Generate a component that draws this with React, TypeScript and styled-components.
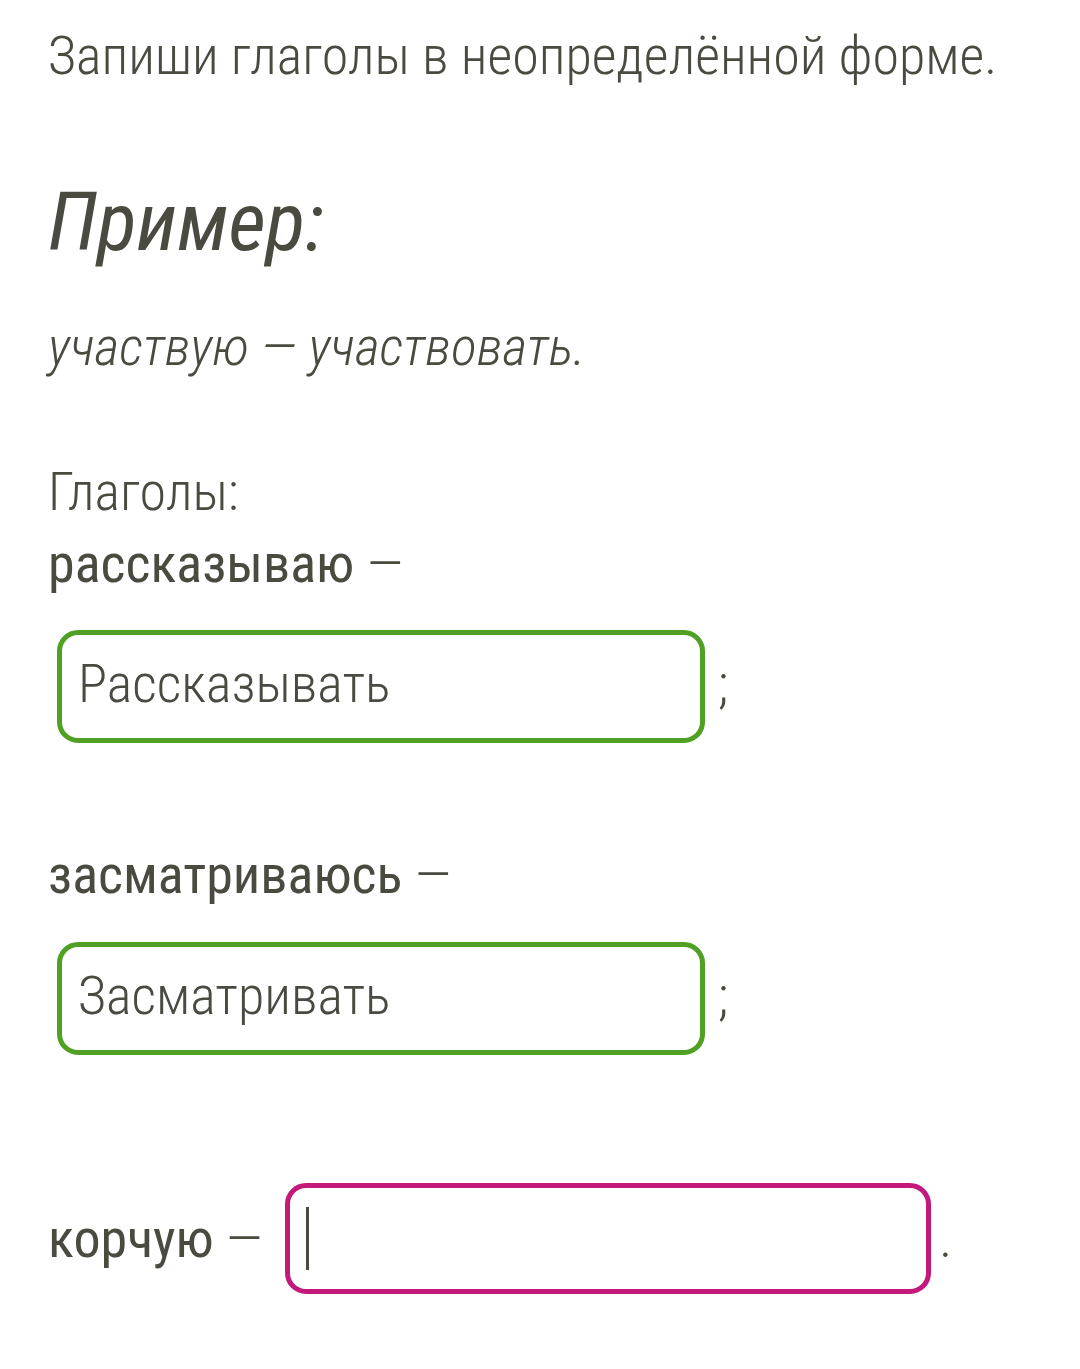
import React from "react";
import styled, { createGlobalStyle } from "styled-components";

const GlobalStyle = createGlobalStyle`
  html, body { margin: 0; padding: 0; background: #ffffff; }
  body {
    font-family: Roboto, "Noto Sans", sans-serif;
    font-stretch: 75%;
    color: #4a4a40;
  }
`;

const Page = styled.main`
  display: flex;
  flex-direction: column;
  padding: 20px 48px 40px;
  font-stretch: 75%;
`;

const Instruction = styled.p`
  margin: 0;
  font-size: 54px;
  font-weight: 300;
  line-height: 72px;
`;

const Heading = styled.h2`
  margin: 80px 0 0;
  font-size: 82px;
  font-weight: 400;
  font-style: italic;
  line-height: 100px;
`;

const Example = styled.p`
  margin: 39px 0 0;
  font-size: 54px;
  font-weight: 300;
  font-style: italic;
  line-height: 72px;
`;

const Label = styled.p<{ $gap: number }>`
  margin: ${(p) => p.$gap}px 0 0;
  font-size: 54px;
  font-weight: 300;
  line-height: 72px;
`;

const Word = styled.p<{ $gap: number }>`
  margin: ${(p) => p.$gap}px 0 0;
  font-size: 54px;
  font-weight: 400;
  line-height: 72px;
`;

const Dash = styled.span`
  font-weight: 300;
`;

const Row = styled.div<{ $gap: number; $indent: number; $center?: boolean }>`
  display: flex;
  align-items: ${(p) => (p.$center ? "center" : "baseline")};
  margin: ${(p) => p.$gap}px 0 0 ${(p) => p.$indent}px;
  font-size: 54px;
  line-height: 72px;
`;

const InlineWord = styled.span`
  font-weight: 400;
  margin-right: 23px;
  white-space: nowrap;
`;

const Field = styled.div<{ $state: "correct" | "active"; $width: number; $height: number }>`
  box-sizing: border-box;
  display: flex;
  align-items: center;
  width: ${(p) => p.$width}px;
  height: ${(p) => p.$height}px;
  padding: 0 16px ${(p) => (p.$state === "correct" ? 6 : 0)}px;
  border: 5px solid ${(p) => (p.$state === "correct" ? "#4fa023" : "#c2197b")};
  border-radius: 21px;
  background: #ffffff;
  font-size: 54px;
  font-weight: 300;
  line-height: 72px;
  color: #4a4a42;
`;

const Caret = styled.span`
  display: block;
  width: 3px;
  height: 63px;
  background: #4a4a42;
`;

const Punct = styled.span<{ $gap: number }>`
  margin-left: ${(p) => p.$gap}px;
  font-weight: 300;
`;

export default function App() {
  return (
    <>
      <GlobalStyle />
      <Page>
        <Instruction>Запиши глаголы в неопределённой форме.</Instruction>
        <Heading>Пример:</Heading>
        <Example>участвую — участвовать.</Example>
        <Label $gap={73}>Глаголы:</Label>
        <Word $gap={0}>
          рассказываю <Dash>—</Dash>
        </Word>
        <Row $gap={30} $indent={9}>
          <Field $state="correct" $width={648} $height={113}>
            Рассказывать
          </Field>
          <Punct $gap={13}>;</Punct>
        </Row>
        <Word $gap={96}>
          засматриваюсь <Dash>—</Dash>
        </Word>
        <Row $gap={31} $indent={9}>
          <Field $state="correct" $width={648} $height={113}>
            Засматривать
          </Field>
          <Punct $gap={13}>;</Punct>
        </Row>
        <Row $gap={128} $indent={0} $center>
          <InlineWord>
            корчую <Dash>—</Dash>
          </InlineWord>
          <Field $state="active" $width={646} $height={111}>
            <Caret />
          </Field>
          <Punct $gap={8}>.</Punct>
        </Row>
      </Page>
    </>
  );
}
